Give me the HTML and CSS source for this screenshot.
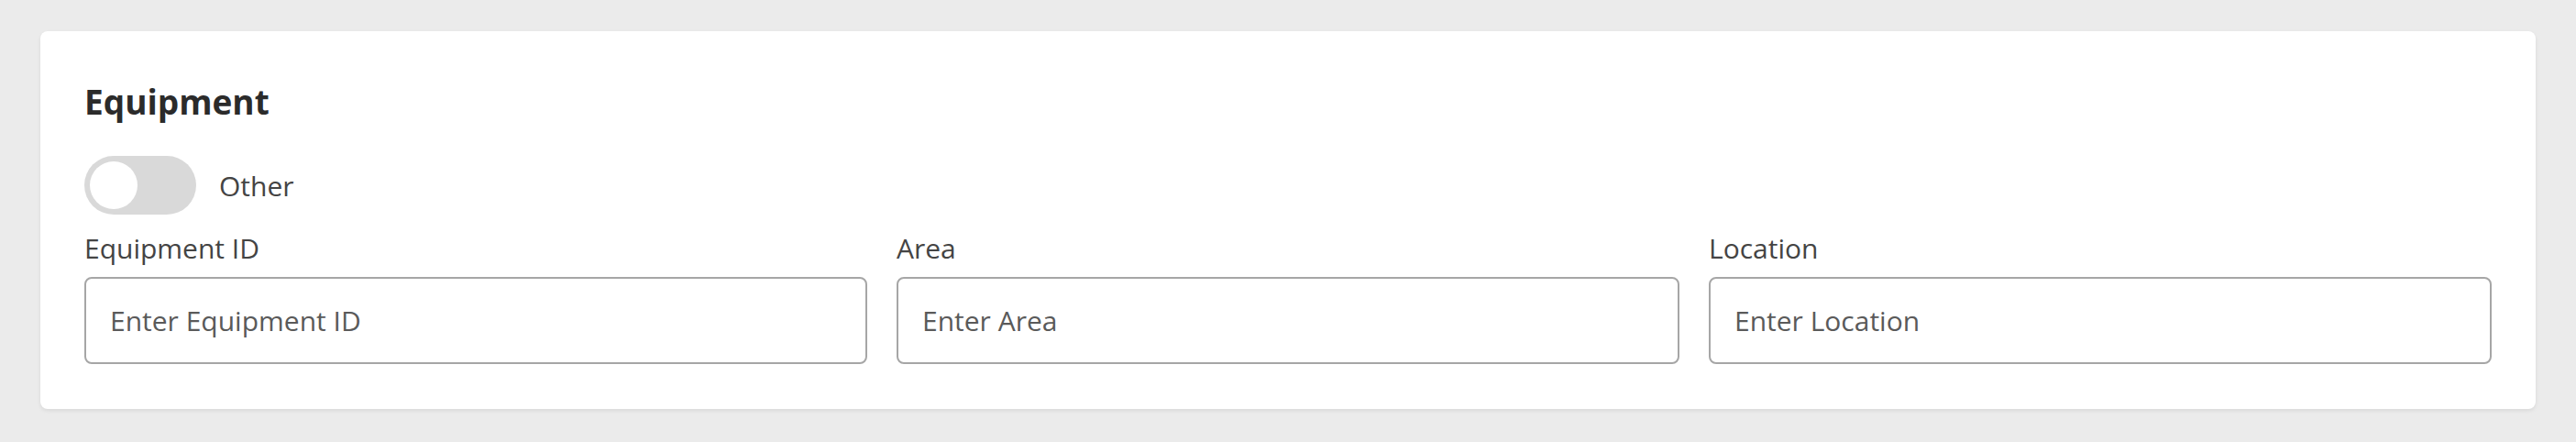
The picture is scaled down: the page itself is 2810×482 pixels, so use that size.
FILE: index.html
```html
<!DOCTYPE html>
<html lang="en">
<head>
<meta charset="utf-8">
<title>Equipment</title>
<link rel="stylesheet" href="styles.css">
</head>
<body>
<section class="card">
  <h2 class="card-title">Equipment</h2>
  <label class="toggle-row">
    <span class="toggle"><span class="toggle-knob"></span></span>
    <span class="toggle-label">Other</span>
  </label>
  <div class="fields">
    <div class="field">
      <label class="field-label" for="eq">Equipment ID</label>
      <input class="field-input" id="eq" type="text" placeholder="Enter Equipment ID">
    </div>
    <div class="field">
      <label class="field-label" for="area">Area</label>
      <input class="field-input" id="area" type="text" placeholder="Enter Area">
    </div>
    <div class="field">
      <label class="field-label" for="loc">Location</label>
      <input class="field-input" id="loc" type="text" placeholder="Enter Location">
    </div>
  </div>
</section>
</body>
</html>
```
FILE: styles.css
```css
* { box-sizing: border-box; }
html, body { margin: 0; padding: 0; }
body {
  background: #ebebeb;
  font-family: "Open Sans", "Noto Sans", sans-serif;
  padding: 34px 44px 36px;
}
.card {
  background: #ffffff;
  border-radius: 8px;
  box-shadow: 0 2px 4px rgba(0, 0, 0, 0.08);
  padding: 55px 48px 49px;
  display: flex;
  flex-direction: column;
}
.card-title {
  margin: 0;
  font-size: 37px;
  line-height: 44px;
  font-weight: 700;
  color: #2b2b2b;
}
.toggle-row {
  margin-top: 37px;
  display: flex;
  align-items: center;
  gap: 25px;
  height: 64px;
}
.toggle {
  width: 122px;
  height: 64px;
  border-radius: 32px;
  background: #d9d9d9;
  padding: 6px;
  display: flex;
  align-items: center;
}
.toggle-knob {
  width: 52px;
  height: 52px;
  border-radius: 50%;
  background: #ffffff;
}
.toggle-label {
  font-size: 30px;
  color: #444444;
}
.fields {
  margin-top: 17px;
  display: grid;
  grid-template-columns: repeat(3, 1fr);
  gap: 32px;
}
.field {
  display: flex;
  flex-direction: column;
  gap: 11px;
}
.field-label {
  font-size: 30px;
  line-height: 40px;
  color: #444444;
}
.field-input {
  height: 95px;
  border: 2px solid #a6a6a6;
  border-radius: 8px;
  padding: 0 26px;
  font-family: "Open Sans", "Noto Sans", sans-serif;
  font-size: 30px;
  color: #333333;
  background: #ffffff;
  outline: none;
}
.field-input::placeholder {
  color: #5a5a5a;
  opacity: 1;
}
```
